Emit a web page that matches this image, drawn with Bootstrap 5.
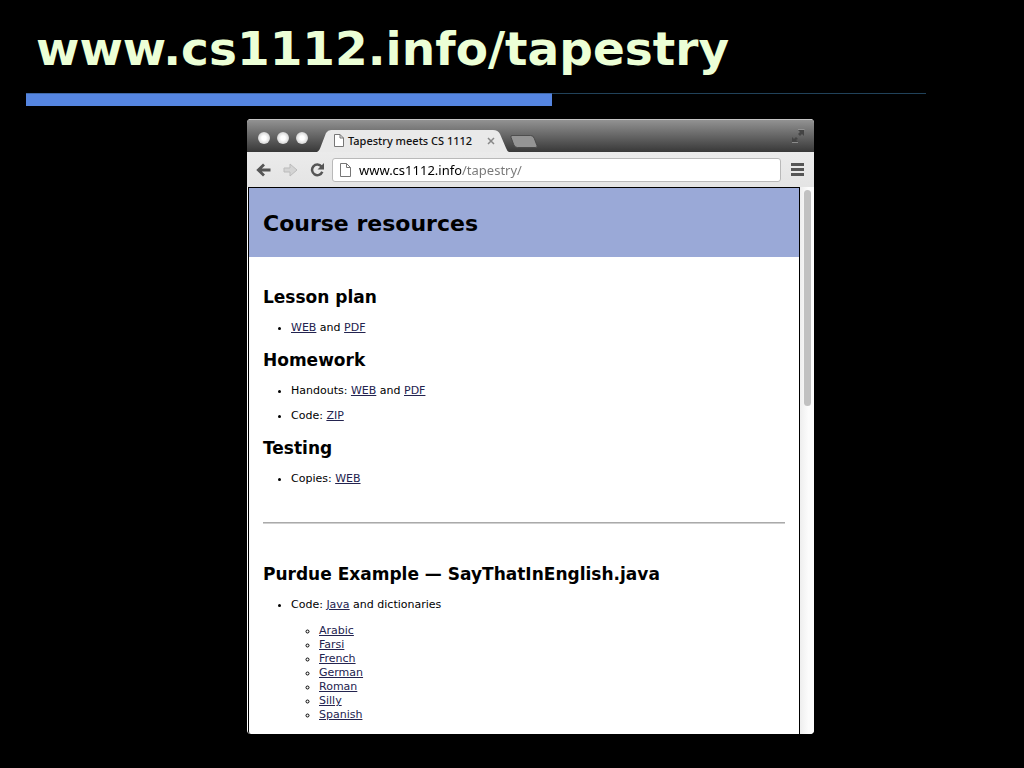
<!DOCTYPE html>
<html lang="en">
<head>
<meta charset="utf-8">
<meta name="viewport" content="width=device-width, initial-scale=1">
<title>www.cs1112.info/tapestry</title>
<link href="https://cdn.jsdelivr.net/npm/bootstrap@5.3.0/dist/css/bootstrap.min.css" rel="stylesheet">
<style>
  body { background: #000; color: #000; font-family: "DejaVu Sans", Verdana, sans-serif; font-size: 11px; line-height: 14px; }
  .slide-title { color: #ecffd6; font-size: 47px; line-height: 56px; font-weight: 700; padding: 21px 36px 16px; }
  .rule-grid { display: grid; grid-template-columns: 26fr 526fr 374fr 98fr; }
  .rule-thick { grid-column: 2; height: 13px; background: #5585e0; border-top: 1px solid #3f68a8; }
  .rule-thin { grid-column: 3; height: 1px; background: #21425a; }
  .stage-grid { display: grid; grid-template-columns: 247fr 567fr 210fr; padding: 13px 0 34px; }
  .browser { grid-column: 2; background: #fff; border-radius: 4px; min-width: 0; }
  .tab-strip { height: 33px; background: linear-gradient(#c4c4c4 0 1px, #929292 1px, #383838); padding: 0 9px 0 11px; }
  .lights { gap: 7px; }
  .dot { width: 12px; height: 12px; border-radius: 50%; background: radial-gradient(circle, #fff 25%, #e0e0e0 60%, #a5a5a5); }
  .page-tab { width: 192px; height: 23px; margin-left: 9px; padding: 0 14px 0 17px; background: #e9e9e9; color: #111; font-family: "Noto Sans", sans-serif; font-size: 11px; font-weight: 500; line-height: 22px; clip-path: path("M0 23 C2 22 3 20 4 17 L9 4 Q11 1 14 1 L176 1 Q181 1 183 5 L189 19 Q190 22 192 23 Z"); }
  .tool-row { height: 35px; background: linear-gradient(#ebebeb, #e4e4e4); padding: 0 10px 0 9px; }
  .plain { background: none; border: 0; padding: 0; line-height: 0; }
  .address { height: 24px; background: #fff; border: 1px solid #b9b9b9; border-radius: 3px; margin: 0 2px 0 8px; padding-left: 7px; }
  .address input { border: 0; outline: 0; padding: 0; height: 22px; min-width: 0; font-family: "Noto Sans", sans-serif; font-size: 13px; line-height: 20px; color: transparent; background: linear-gradient(90deg, #000 102px, #777 102px); -webkit-background-clip: text; background-clip: text; }
  .page-view { border: 1px solid #000; border-bottom: 0; margin-left: 1px; border-bottom-left-radius: 3px; min-width: 0; }
  .banner { background: #9aa9d7; padding: 22px 14px 19px; }
  h1 { font-size: 22px; line-height: 28px; font-weight: 700; margin: 0; }
  .doc { padding: 30px 14px 12px; }
  h2 { font-size: 17px; line-height: 20px; font-weight: 700; margin: 0 0 14px; }
  .doc ul { padding-left: 28px; margin: 0 0 15px; }
  .doc > ul > li + li { margin-top: 11px; }
  .doc ul ul { margin: 12px 0 0; }
  .doc a { color: #23234f; }
  .doc hr { height: 2px; border: 0; opacity: 1; background: linear-gradient(#aaa 1px, #d0d0d0 1px); margin: 36px 0 40px; }
  .scroll-track { width: 14px; background: linear-gradient(90deg, #eee, #fcfcfc 60%); border-bottom-right-radius: 3px; padding: 3px 3px 0 4px; }
  .scroll-thumb { height: 216px; border-radius: 4px; background: #c1c1c1; }
</style>
</head>
<body>
<header>
  <div class="slide-title">www.cs1112.info/tapestry</div>
  <div class="rule-grid"><div class="rule-thick"></div><div class="rule-thin"></div></div>
</header>
<main class="stage-grid">
  <section class="browser overflow-hidden">
    <div class="tab-strip d-flex align-items-end">
      <div class="lights d-flex align-self-center pt-1">
        <span class="dot"></span><span class="dot"></span><span class="dot"></span>
      </div>
      <div class="page-tab d-flex align-items-center">
        <svg class="flex-shrink-0" width="10" height="13" viewBox="0 0 10 13" fill="#fff" stroke="#777"><path d="M.5.5h5.500l3.500 3.500v8.500h-9zM6 .5V4h3.500"/></svg>
        <span class="ms-1 text-nowrap">Tapestry meets CS 1112</span>
        <button class="plain ms-auto" aria-label="Close tab"><svg width="8" height="8" viewBox="0 0 8 8" stroke="#888" stroke-width="1.500"><path d="M1 1l6 6M7 1L1 7"/></svg></button>
      </div>
      <button class="plain pb-1" aria-label="New tab"><svg width="30" height="13" viewBox="0 0 30 14"><path d="M2 .5h20q3 0 4 3l3 8q1 2-2 2H8q-3 0-4-3L1 2.500Q.5.5 2 .5z" fill="#949494" stroke="#474747"/></svg></button>
      <button class="plain ms-auto align-self-center" aria-label="Full screen"><svg width="14" height="14" viewBox="0 0 14 14" fill="#444"><path d="M7 1h6v6l-2-2-2 2-2-2 2-2zM1 13V8l2 2 2-2 2 2-2 1 2 2z"/><path d="M7 .5h6.500M1 13.500h6" stroke="#999" stroke-width=".8"/></svg></button>
    </div>
    <div class="tool-row d-flex align-items-center">
      <button class="plain" aria-label="Back"><svg width="15" height="14" viewBox="0 0 15 14" fill="none" stroke="#555" stroke-width="2.800"><path d="M14.500 7H3M8 1.500L2.300 7L8 12.500"/></svg></button>
      <button class="plain ms-2 ps-1" aria-label="Forward"><svg width="15" height="14" viewBox="0 0 15 14"><path d="M1 5h6V1l7 6-7 6V9H1z" fill="#d4d4d4" stroke="#bbb"/></svg></button>
      <button class="plain ms-2 ps-1" aria-label="Reload"><svg width="14" height="14" viewBox="0 0 14 14"><path d="M11.500 3.500A5.300 5.300 0 1 0 12.300 8.800" fill="none" stroke="#555" stroke-width="2.500"/><path d="M14 0v6.500H7.500z" fill="#555"/></svg></button>
      <div class="address d-flex align-items-center flex-grow-1">
        <svg class="flex-shrink-0 me-2" width="11" height="14" viewBox="0 0 11 14" fill="#fff" stroke="#777"><path d="M.5.5h6l4 4v9H.5zM6.500.5v4h4"/></svg>
        <input class="flex-grow-1" type="text" value="www.cs1112.info/tapestry/" aria-label="Address">
      </div>
      <button class="plain ms-2" aria-label="Menu"><svg width="13" height="13" viewBox="0 0 13 13" fill="#555"><path d="M0 0h13v3H0zM0 5h13v3H0zM0 10h13v3H0z"/></svg></button>
    </div>
    <div class="d-flex">
      <article class="page-view flex-grow-1">
        <div class="banner"><h1>Course resources</h1></div>
        <div class="doc">
          <h2>Lesson plan</h2>
          <ul><li><a href="#">WEB</a> and <a href="#">PDF</a></li></ul>
          <h2>Homework</h2>
          <ul>
            <li>Handouts: <a href="#">WEB</a> and <a href="#">PDF</a></li>
            <li>Code: <a href="#">ZIP</a></li>
          </ul>
          <h2>Testing</h2>
          <ul><li>Copies: <a href="#">WEB</a></li></ul>
          <hr>
          <h2>Purdue Example — SayThatInEnglish.java</h2>
          <ul class="mb-0">
            <li>Code: <a href="#">Java</a> and dictionaries
              <ul>
                <li><a href="#">Arabic</a></li>
                <li><a href="#">Farsi</a></li>
                <li><a href="#">French</a></li>
                <li><a href="#">German</a></li>
                <li><a href="#">Roman</a></li>
                <li><a href="#">Silly</a></li>
                <li><a href="#">Spanish</a></li>
              </ul>
            </li>
          </ul>
        </div>
      </article>
      <div class="scroll-track"><div class="scroll-thumb"></div></div>
    </div>
  </section>
</main>
<script src="https://cdn.jsdelivr.net/npm/bootstrap@5.3.0/dist/js/bootstrap.bundle.min.js"></script>
</body>
</html>
